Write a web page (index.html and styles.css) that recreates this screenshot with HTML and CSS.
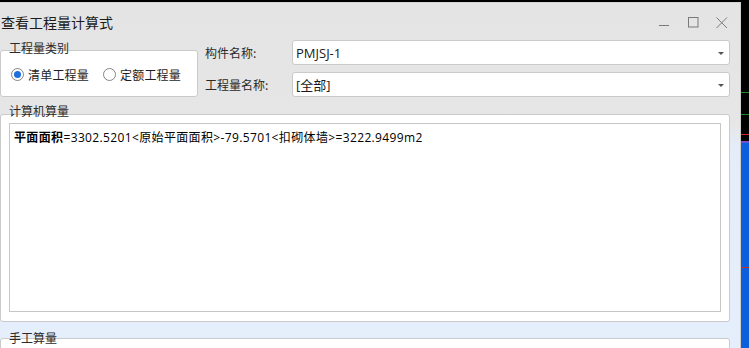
FILE: index.html
```html
<!DOCTYPE html>
<html lang="zh">
<head>
<meta charset="utf-8">
<title>查看工程量计算式</title>
<link rel="stylesheet" href="styles.css">
</head>
<body>
<div class="screen">
  <div class="window">
    <div class="titlebar">
      <div class="title">查看工程量计算式</div>
      <div class="controls">
        <svg class="ctl" width="12" height="12" viewBox="0 0 12 12"><path d="M1 8.5H11" stroke="#7a7a7a" stroke-width="1"/></svg>
        <svg class="ctl" width="12" height="12" viewBox="0 0 12 12"><rect x="1.5" y="0.5" width="9.5" height="9.5" fill="none" stroke="#7a7a7a" stroke-width="1"/></svg>
        <svg class="ctl" width="12" height="12" viewBox="0 0 12 12"><path d="M0.5 0.5L11 11M11 0.5L0.5 11" stroke="#7a7a7a" stroke-width="1"/></svg>
      </div>
    </div>

    <div class="top">
      <div class="group small">
        <div class="legend">工程量类别</div>
        <div class="box radios">
          <label class="radio"><span class="dot checked"></span>清单工程量</label>
          <label class="radio"><span class="dot"></span>定额工程量</label>
        </div>
      </div>
      <div class="fields">
        <div class="field">
          <span class="flabel">构件名称:</span>
          <div class="select"><span class="sval">PMJSJ-1</span><span class="arrow"></span></div>
        </div>
        <div class="field">
          <span class="flabel">工程量名称:</span>
          <div class="select"><span class="sval">[全部]</span><span class="arrow"></span></div>
        </div>
      </div>
    </div>

    <div class="group calc">
      <div class="legend">计算机算量</div>
      <div class="box wide">
        <div class="textarea"><b>平面面积</b>=3302.5201&lt;原始平面面积&gt;-79.5701&lt;扣砌体墙&gt;=3222.9499m2</div>
      </div>
    </div>

    <div class="group manual">
      <div class="legend">手工算量</div>
      <div class="box wide rest"></div>
    </div>
  </div>
  <div class="strip">
    <div class="s black" style="height:92px"></div>
    <div class="s green"></div>
    <div class="s black" style="height:21px"></div>
    <div class="s green"></div>
    <div class="s black" style="height:19px"></div>
    <div class="s red"></div>
    <div class="s black" style="height:6px"></div>
    <div class="s purple"></div>
    <div class="s blue" style="height:124px"></div>
    <div class="s red"></div>
    <div class="s blue fill"></div>
  </div>
</div>
</body>
</html>
```

FILE: styles.css
```css
* { box-sizing: border-box; }
html, body { margin: 0; padding: 0; background: #000; }
body {
  font-family: "Open Sans", "Noto Sans CJK SC", sans-serif;
  font-size: 12px;
  color: #222;
}
.screen {
  width: 749px;
  height: 348px;
  display: flex;
  overflow: hidden;
  background: #000;
}
.window {
  width: 741px;
  height: 346px;
  margin-top: 2px;
  display: flex;
  flex-direction: column;
  overflow: hidden;
  border-top: 1px solid #d4d4d4;
  border-right: 1px solid #cdcdcd;
  background: linear-gradient(to bottom, #e4e4e4 0px, #e6e6e6 120px, #e5edf9 145px, #e5eefc 346px);
}
.titlebar {
  height: 37px;
  flex: none;
  display: flex;
  align-items: center;
  justify-content: space-between;
  padding-top: 1px;
}
.title {
  font-family: "Noto Sans CJK SC", sans-serif;
  font-size: 14px;
  color: #1b1b1b;
  padding-left: 1px;
}
.controls {
  display: flex;
  align-items: center;
  gap: 17px;
  padding-right: 12px;
  margin-top: 2px;
}
.ctl { display: block; }

.top {
  display: flex;
  flex: none;
}
.group { display: flex; flex-direction: column; }
.legend {
  font-family: "Noto Sans CJK SC", sans-serif;
  font-size: 12px;
  line-height: 16px;
  height: 16px;
  color: #2a2a2a;
  padding-left: 9px;
  position: relative;
  z-index: 1;
}
.small { width: 198px; }
.small .legend { margin-bottom: -6px; }
.box {
  background: #fff;
  border: 1px solid #cacaca;
  border-radius: 3px;
}
.radios {
  height: 47px;
  display: flex;
  align-items: center;
  padding-left: 10px;
  gap: 14px;
  padding-top: 1px;
}
.radio {
  display: flex;
  align-items: center;
  gap: 4px;
  font-family: "Noto Sans CJK SC", sans-serif;
  font-size: 12px;
  color: #1e1e1e;
  letter-spacing: 0.2px;
}
.dot {
  width: 13px;
  height: 13px;
  border: 1px solid #858585;
  border-radius: 50%;
  background: #fff;
  display: flex;
  align-items: center;
  justify-content: center;
}
.dot.checked::after {
  content: "";
  width: 7px;
  height: 7px;
  border-radius: 50%;
  background: #1f6fdf;
}
.fields {
  margin-left: 7px;
  display: flex;
  flex-direction: column;
  gap: 7px;
}
.field {
  display: flex;
  align-items: center;
}
.flabel {
  width: 87px;
  font-family: "Noto Sans CJK SC", sans-serif;
  font-size: 12px;
  color: #2a2a2a;
}
.select {
  width: 438px;
  height: 25px;
  background: #fff;
  border: 1px solid #cacaca;
  border-radius: 3px;
  display: flex;
  align-items: center;
  justify-content: space-between;
  padding: 0 5px 0 3px;
}
.sval {
  font-size: 13px;
  color: #1a1a1a;
}
.arrow {
  width: 0;
  height: 0;
  border-left: 3px solid transparent;
  border-right: 3px solid transparent;
  border-top: 3px solid #555;
  margin-top: 1px;
}
.calc { margin-top: 6px; }
.calc .legend { margin-bottom: -5px; }
.wide { width: 730px; }
.calc .box {
  height: 208px;
  padding: 8px;
}
.textarea {
  height: 189px;
  border: 1px solid #c6c6c6;
  background: #fff;
  padding: 5px 4px;
  font-size: 12px;
  line-height: 16px;
  color: #000;
  letter-spacing: 0.36px;
}
.textarea b {
  font-family: "Noto Sans CJK SC", sans-serif;
  font-weight: bold;
}
.manual { margin-top: 8px; }
.manual .legend { margin-bottom: -8px; }
.rest { height: 40px; border-radius: 3px 3px 0 0; }

.strip {
  width: 8px;
  height: 348px;
  display: flex;
  flex-direction: column;
}
.s { flex: none; width: 8px; }
.black { background: #000; }
.green { height: 1px; background: #1b8a22; }
.red { height: 1px; background: #d22a2a; }
.purple { height: 2px; background: linear-gradient(#9a3fc4, #4a5fd6); }
.blue { background: #0b5fdc; }
.fill { flex: 1; }
```
